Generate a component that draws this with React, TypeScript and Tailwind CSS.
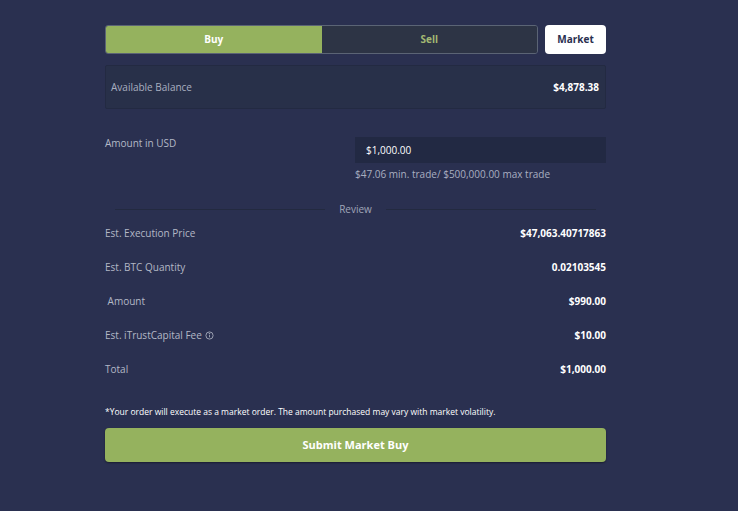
import React from 'react';

const rows = [
    { label: "Est. Execution Price", value: "$47,063.40717863" },
    { label: "Est. BTC Quantity", value: "0.02103545" },
    { label: "\u00A0Amount", value: "$990.00" },
    { label: "Est. iTrustCapital Fee", value: "$10.00", info: true },
    { label: "Total", value: "$1,000.00" },
];

const App = () => {
    return (
        <div className="w-[738px] h-[511px] bg-[#2a3050] flex pl-[105px] font-['Open_Sans',sans-serif] text-[10px] text-gray-300">
            <div className="w-[501px] pt-[25px] flex flex-col">

                {/* Buy / Sell toggle + Market */}
                <div className="flex gap-[7px] h-[29px]">
                    <div className="flex-1 flex rounded-[3px] overflow-hidden border border-[#5b6475]">
                        <button className="flex-1 bg-[#95b25e] text-white font-bold">Buy</button>
                        <button className="flex-1 bg-[#2d3445] text-[#a3b872] font-bold">Sell</button>
                    </div>
                    <button className="w-[61px] bg-white rounded-[4px] text-[#2a3050] font-bold">Market</button>
                </div>

                {/* Available balance */}
                <div className="mt-[11px] h-[44px] pl-[5px] pr-[6px] flex items-center justify-between bg-[#283049] border border-[#232a42] rounded-[2px]">
                    <span className="text-[#a9afc0]">Available Balance</span>
                    <span className="text-white font-bold">$4,878.38</span>
                </div>

                {/* Amount in USD */}
                <div className="mt-[28px] flex">
                    <span className="w-[250px] text-[#b3b8c6] -mt-[1px]">Amount in USD</span>
                    <div className="flex-1 flex flex-col">
                        <div className="h-[26px] bg-[#222943] flex items-center px-[11px] text-white">$1,000.00</div>
                        <span className="mt-[4px] text-[#a9afc0]">$47.06 min. trade/ $500,000.00 max trade</span>
                    </div>
                </div>

                {/* Review divider */}
                <div className="mt-[20px] flex items-center gap-[14px] px-[10px]">
                    <div className="flex-1 h-px bg-[#232a40]" />
                    <span className="text-[#a0a6b8]">Review</span>
                    <div className="flex-1 h-px bg-[#232a40]" />
                </div>

                {/* Review rows */}
                <div className="mt-[9px] flex flex-col gap-[20px]">
                    {rows.map((r) => (
                        <div key={r.label} className="flex justify-between items-center h-[14px]">
                            <span className="text-[#b3b8c6] flex items-center gap-[3px]">
                                {r.label}
                                {r.info && (
                                    <svg width="9" height="9" viewBox="0 0 10 10" fill="none" stroke="currentColor" strokeWidth="0.9">
                                        <circle cx="5" cy="5" r="4" />
                                        <line x1="5" y1="4.5" x2="5" y2="7" />
                                        <circle cx="5" cy="3" r="0.4" fill="currentColor" />
                                    </svg>
                                )}
                            </span>
                            <span className="text-white font-bold">{r.value}</span>
                        </div>
                    ))}
                </div>

                {/* Note */}
                <p className="mt-[30px] text-[8.5px] text-white">*Your order will execute as a market order. The amount purchased may vary with market volatility.</p>

                {/* Submit */}
                <button className="mt-[9px] h-[34px] w-full rounded-[4px] bg-[#95b25e] text-white font-bold text-[11px] shadow-[0_1px_2px_rgba(0,0,0,0.4)]">
                    Submit Market Buy
                </button>
            </div>
        </div>
    );
}

export default App;
